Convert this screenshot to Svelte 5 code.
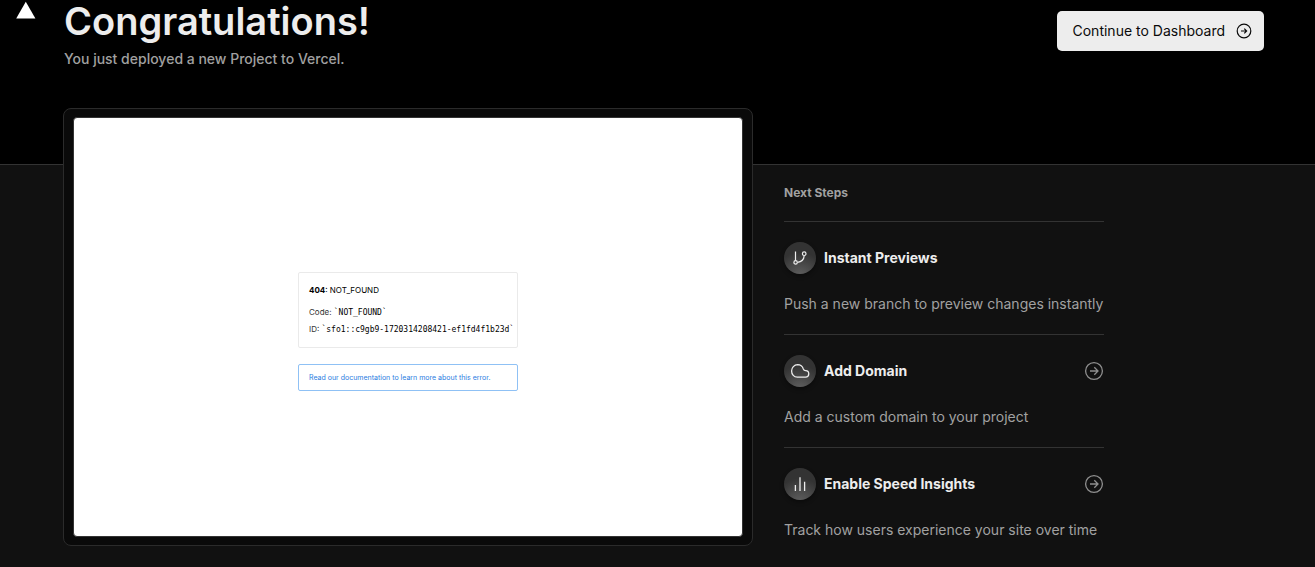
<script>
  const steps = [
    { title: 'Instant Previews', text: 'Push a new branch to preview changes instantly', icon: 'branch', link: false },
    { title: 'Add Domain', text: 'Add a custom domain to your project', icon: 'cloud', link: true },
    { title: 'Enable Speed Insights', text: 'Track how users experience your site over time', icon: 'bars', link: true }
  ];
</script>

{#snippet arrow(size)}
  <svg width={size} height={size} viewBox="0 0 20 20" fill="none" stroke="currentColor" stroke-width="1.3" aria-hidden="true">
    <circle cx="10" cy="10" r="8.4" />
    <path d="M6 10h7.6M10.3 6.3 14 10l-3.7 3.7" />
  </svg>
{/snippet}

<div class="page">
  <header>
    <a class="logo" href="#home" aria-label="Vercel">
      <svg width="20" height="18" viewBox="0 0 20 18" aria-hidden="true"><path d="M9.8.8 19.4 17.6H.2z" fill="#fff" /></svg>
    </a>
    <div class="intro">
      <h1>Congratulations!</h1>
      <p>You just deployed a new Project to Vercel.</p>
    </div>
    <button type="button" class="continue">
      <span>Continue to Dashboard</span>
      <svg width="16" height="16" viewBox="0 0 16 16" fill="none" stroke="currentColor" stroke-width="1.2" aria-hidden="true">
        <circle cx="8" cy="8" r="6.8" />
        <path d="M5 8h5.4M8.3 5.7 10.6 8l-2.3 2.3" />
      </svg>
    </button>
  </header>

  <main>
    <div class="frame">
      <div class="screen">
        <div class="error">
          <div class="details">
            <p class="code"><strong>404</strong>: NOT_FOUND</p>
            <p>Code: <code>`NOT_FOUND`</code></p>
            <p>ID: <code>`sfo1::c9gb9-1720314208421-ef1fd4f1b23d`</code></p>
          </div>
          <a class="docs" href="#docs">Read our documentation to learn more about this error.</a>
        </div>
      </div>
    </div>

    <section class="next">
      <h2>Next Steps</h2>
      {#each steps as step}
        <article>
          <div class="head">
            <span class="badge">
              {#if step.icon === 'branch'}
                <svg width="16" height="16" viewBox="0 0 16 16" fill="none" stroke="currentColor" stroke-width="1.2" aria-hidden="true">
                  <path d="M3.5 1.5v9.2M12.2 5.6c-.3 3.7-2.6 6.3-6.7 6.8" />
                  <circle cx="3.6" cy="12.4" r="1.7" />
                  <circle cx="12.2" cy="3.7" r="1.8" />
                </svg>
              {:else if step.icon === 'cloud'}
                <svg width="20" height="20" viewBox="0 0 20 20" fill="none" stroke="currentColor" stroke-width="1.3" stroke-linejoin="round" aria-hidden="true">
                  <path d="M7.3 16.2h8a3.3 3.3 0 0 0 .3-6.6c-1 0-1.8-.4-2.3-1.7A6 6 0 0 0 7.6 3.7 6.2 6.2 0 0 0 1.6 10c0 3.5 2.4 6.2 5.7 6.2z" />
                </svg>
              {:else}
                <svg width="16" height="16" viewBox="0 0 16 16" fill="none" stroke="currentColor" stroke-width="1.3" aria-hidden="true">
                  <path d="M3.4 9v6M8 1.2V15M12.6 5.8V15" />
                </svg>
              {/if}
            </span>
            <h3>{step.title}</h3>
            {#if step.link}
              <a class="go" href="#step" aria-label={step.title}>{@render arrow(20)}</a>
            {/if}
          </div>
          <p>{step.text}</p>
        </article>
      {/each}
    </section>
  </main>
</div>

<style>
  :global(body) {
    margin: 0;
    background: #111;
  }
  .page {
    min-height: 100vh;
    box-sizing: border-box;
    background: #111;
    color: #ededed;
    font-family: Inter, 'Liberation Sans', sans-serif;
  }
  h1, h2, h3, p {
    margin: 0;
  }
  svg {
    display: block;
  }
  header {
    display: flex;
    align-items: flex-start;
    box-sizing: border-box;
    padding: 0 51px 95px 16px;
    background: #000;
    border-bottom: 1px solid #333;
  }
  .logo {
    padding-top: 1px;
    margin-right: 28px;
  }
  .intro {
    flex: 1;
  }
  h1 {
    font-size: 38px;
    line-height: 42px;
    font-weight: 600;
  }
  .intro p {
    margin-top: 7px;
    font-size: 14px;
    line-height: 20px;
    font-weight: 500;
    color: #a1a1a1;
  }
  .continue {
    display: flex;
    align-items: center;
    gap: 11px;
    height: 40px;
    margin-top: 11px;
    padding: 0 12px 0 16px;
    border: 0;
    border-radius: 5px;
    background: #ededed;
    color: #0a0a0a;
    font: 400 14px/20px Inter, 'Liberation Sans', sans-serif;
  }
  main {
    display: grid;
    grid-template-columns: minmax(0, 690px) 320px;
    gap: 31px;
    padding: 0 24px 16px 63px;
  }
  .frame {
    align-self: start;
    margin-top: -57px;
    padding: 8px 9px;
    border: 1px solid #2b2b2b;
    border-radius: 8px;
    background: #0a0a0a;
  }
  .screen {
    display: flex;
    align-items: center;
    justify-content: center;
    box-sizing: border-box;
    aspect-ratio: 67 / 42;
    border: 1px solid #333;
    border-radius: 4px;
    background: #fff;
    color: #111;
  }
  .error {
    width: 220px;
    margin-top: 8px;
    font-size: 8px;
  }
  .details {
    padding: 11px 10px 9px;
    border: 1px solid #eaeaea;
    border-radius: 2px;
  }
  .details p {
    line-height: 17px;
    color: #333;
    white-space: nowrap;
  }
  .details .code {
    margin-bottom: 8px;
    line-height: 12px;
    color: #000;
  }
  code {
    font: 8px 'DejaVu Sans Mono', monospace;
    color: #000;
  }
  .docs {
    display: block;
    margin-top: 16px;
    padding: 6px 10px;
    border: 1px solid #8fc1f5;
    border-radius: 2px;
    font-size: 7px;
    line-height: 13px;
    color: #2a7de1;
    text-decoration: none;
  }
  h2 {
    padding: 18px 0;
    font-size: 12px;
    line-height: 20px;
    font-weight: 700;
    color: #a1a1a1;
  }
  article {
    border-top: 1px solid #333;
    padding: 20px 0;
  }
  .head {
    display: flex;
    align-items: center;
    gap: 8px;
    margin-bottom: 20px;
  }
  .badge {
    display: grid;
    place-items: center;
    width: 32px;
    height: 32px;
    border-radius: 50%;
    background: radial-gradient(circle at 50% 110%, #626262 0, #333 65%);
    box-shadow: 0 2px 4px #0006;
    color: #ededed;
  }
  h3 {
    flex: 1;
    font-size: 14px;
    line-height: 20px;
    font-weight: 700;
  }
  .go {
    color: #8f8f8f;
  }
  article p {
    font-size: 14px;
    line-height: 20px;
    color: #a1a1a1;
  }
</style>
